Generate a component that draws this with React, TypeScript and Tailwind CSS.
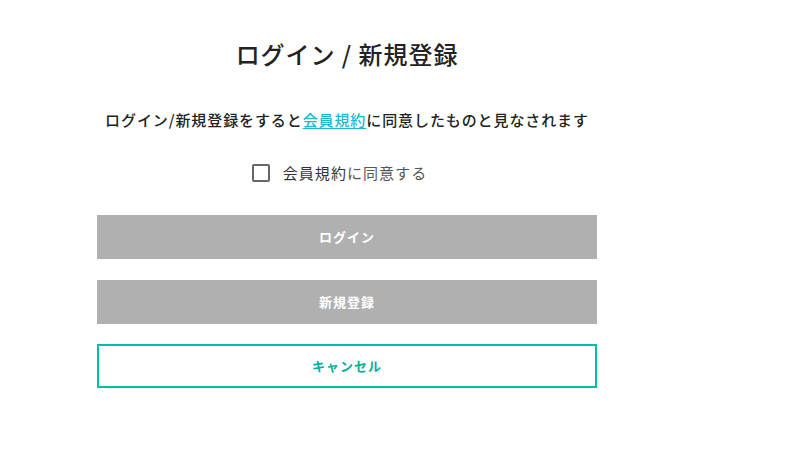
import { useState } from "react";

const font = { fontFamily: '"Noto Sans CJK JP", "Noto Sans", sans-serif' };

export default function App() {
  const [agreed, setAgreed] = useState(false);

  return (
    <div className="min-h-[458px] w-full bg-white text-[#222]" style={font}>
      <div className="ml-[97px] flex w-[500px] flex-col items-center pt-[37px]">
        <h1 className="text-[24px] font-medium leading-[34px] tracking-[0.04em]">
          ログイン / 新規登録
        </h1>
        <p className="mt-[39px] text-[15px] font-medium leading-[20px] tracking-[0.06em]">
          ログイン/新規登録をすると
          <a href="#" className="text-[#1cb8cc] underline underline-offset-2">
            会員規約
          </a>
          に同意したものと見なされます
        </p>
        <label className="mt-[33px] flex cursor-pointer items-center gap-[13px] pr-[15px]">
          <input
            type="checkbox"
            checked={agreed}
            onChange={(e) => setAgreed(e.target.checked)}
            className="h-[18px] w-[18px] appearance-none rounded-[2px] border-2 border-[#666] bg-white"
          />
          <span className="text-[15px] leading-[20px] text-[#555] tracking-[0.07em]">
            <span className="text-[#333]">会員規約</span>に同意する
          </span>
        </label>
        <div className="mt-[32px] flex w-full flex-col gap-[20px]">
          <button className="h-[44px] w-full bg-[#b0b0b0] text-[13px] font-bold tracking-[0.08em] text-white">
            ログイン
          </button>
          <button className="mt-px h-[44px] w-full bg-[#b0b0b0] text-[13px] font-bold tracking-[0.08em] text-white">
            新規登録
          </button>
          <button className="h-[44px] w-full border-2 border-[#00bfa5] bg-white text-[13px] font-bold tracking-[0.08em] text-[#00b09a]">
            キャンセル
          </button>
        </div>
      </div>
    </div>
  );
}
